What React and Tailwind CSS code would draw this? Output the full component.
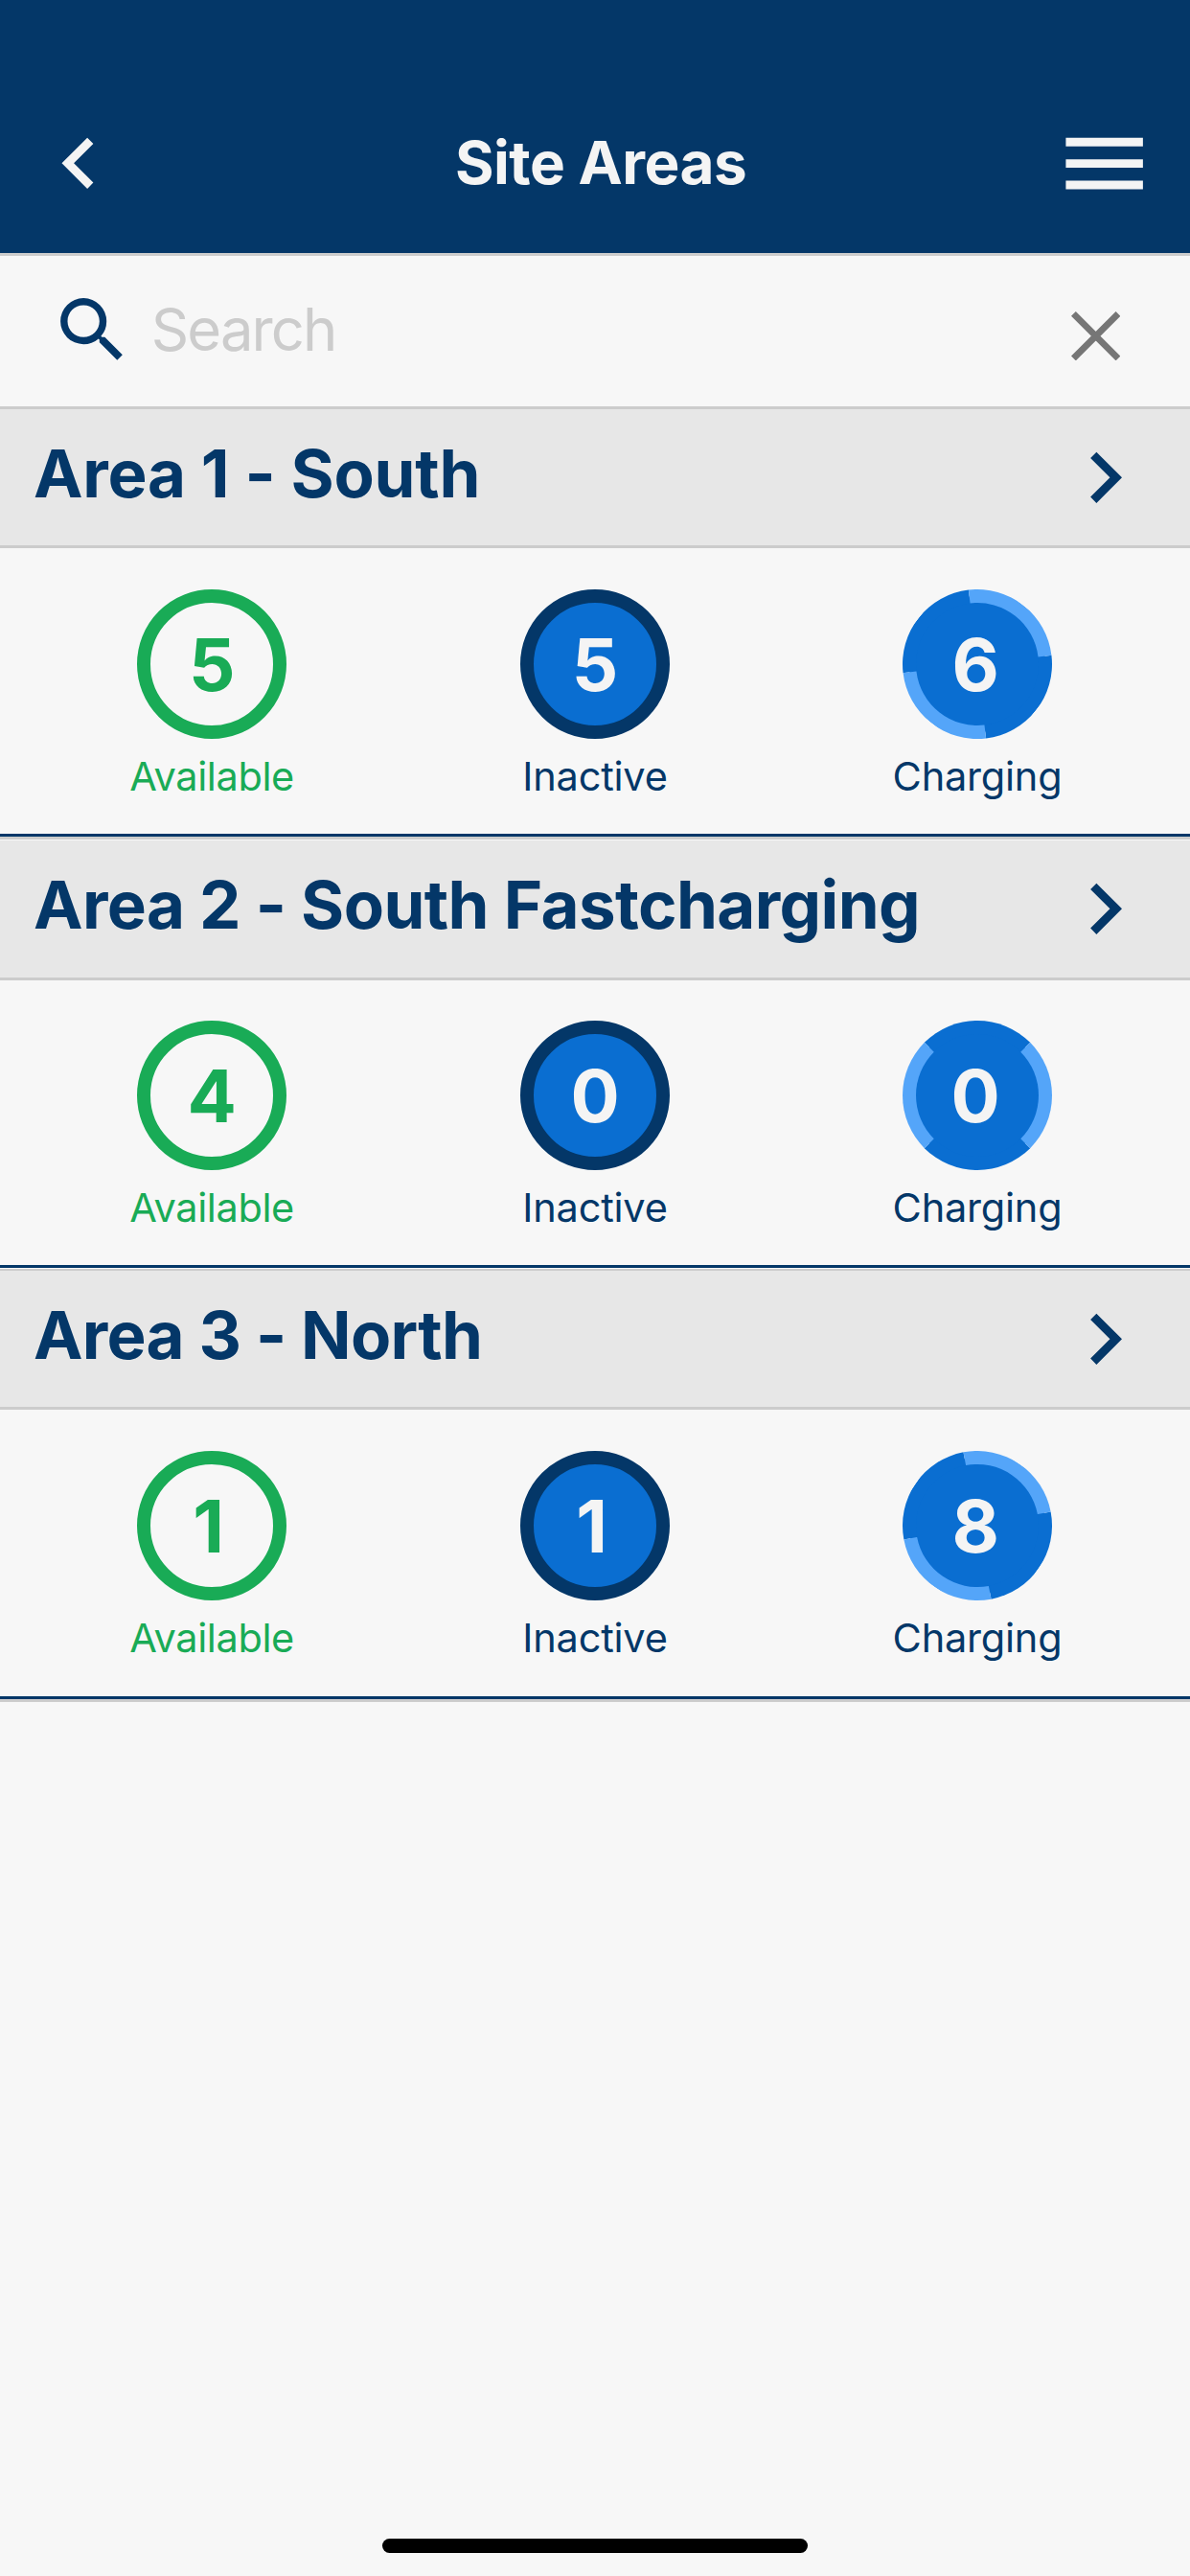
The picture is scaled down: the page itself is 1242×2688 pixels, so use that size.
import React from "react";

const AREAS = [
  {
    name: "Area 1 - South",
    title: "h-[142px] tracking-[-0.25px]",
    body: "h-[298px] pt-[43px]",
    divider: "h-[4px] border-t-[3px] border-[#cccccc]",
    spin: "-rotate-[51.7deg]",
    counts: [5, 5, 6],
  },
  {
    name: "Area 2 - South Fastcharging",
    title: "h-[143px] tracking-[-0.6px]",
    body: "h-[297px] pt-[42px]",
    divider: "h-[3px] border-b-[2px] border-[#cccccc]",
    spin: "",
    counts: [4, 0, 0],
  },
  {
    name: "Area 3 - North",
    title: "h-[142px] tracking-[-0.72px]",
    body: "h-[299px] pt-[43px]",
    divider: "h-[3px] border-t-[3px] border-[#cccccc]",
    spin: "-rotate-[55.7deg]",
    counts: [1, 1, 8],
  },
];

function Icon({ d, className }) {
  return (
    <svg viewBox="0 0 24 24" fill="currentColor" className={`shrink-0 ${className}`}>
      <path d={d} />
    </svg>
  );
}

function Header() {
  return (
    <header className="flex h-[267px] items-center border-b-[3px] border-[#cccccc] bg-[#043768] pt-[76px] pr-[36px] pl-[29px] text-[#f4f4f4]">
      <Icon className="size-[106.5px]" d="M15.41 7.41 14 6l-6 6 6 6 1.41-1.41L10.83 12z" />
      <h1 className="flex-1 pl-[20px] text-center text-[62px] leading-[80px] font-bold tracking-[-0.5px]">
        Site Areas
      </h1>
      <Icon className="mt-[2px] size-[107.3px]" d="M3 18h18v-2H3v2zm0-5h18v-2H3v2zm0-7v2h18V6H3z" />
    </header>
  );
}

function SearchBar() {
  return (
    <div className="flex h-[160px] items-center border-b-[3px] border-[#cccccc] pr-[73px] pl-[52px]">
      <Icon
        className="-mt-[2px] size-[88.8px] text-[#043768]"
        d="M15.5 14h-.79l-.28-.27A6.471 6.471 0 0 0 16 9.5 6.5 6.5 0 1 0 9.5 16c1.61 0 3.09-.59 4.23-1.57l.27.28v.79l5 4.99L20.49 19l-4.99-5zm-6 0C7.01 14 5 11.99 5 9.5S7.01 5 9.5 5 14 7.01 14 9.5 11.99 14 9.5 14z"
      />
      <span className="flex-1 pb-[3px] pl-[17px] text-[61.5px] leading-[80px] tracking-[-1.9px] text-[#cccccc]">
        Search
      </span>
      <svg viewBox="0 0 51.4 51.4" className="mt-[10px] size-[51.4px] text-[#767676]">
        <path
          d="M2.4 2.4 49 49M49 2.4 2.4 49"
          stroke="currentColor"
          strokeWidth="6.8"
          fill="none"
        />
      </svg>
    </div>
  );
}

function Stat({ label, labelClass, ring, number, children }) {
  return (
    <div className={`flex flex-col items-center ${labelClass}`}>
      <div className="grid size-[156px] place-items-center">
        <div className={`col-start-1 row-start-1 size-[156px] rounded-full border-[14px] ${ring}`} />
        <span
          className={`col-start-1 row-start-1 text-[76px] leading-[90px] font-bold ${number} ${
            children === 1 ? "pr-[7px]" : ""
          }`}
        >
          {children}
        </span>
      </div>
      <span className="mt-[15px] text-[41.5px] leading-[48px]">{label}</span>
    </div>
  );
}

function Area({ area }) {
  const [available, inactive, charging] = area.counts;
  return (
    <section>
      <div
        className={`box-content flex items-center justify-between border-b-[3px] border-[#cccccc] bg-[#e7e7e7] pr-[36px] pl-[35px] text-[#043768] ${area.title}`}
      >
        <h2 className="pb-[9px] text-[69px] leading-[90px] font-bold whitespace-nowrap">
          {area.name}
        </h2>
        <Icon className="size-[106.5px]" d="M10 6 8.59 7.41 13.17 12l-4.58 4.59L10 18l6-6z" />
      </div>
      <div className={`grid grid-cols-[400px_400px_398px] pl-[21px] ${area.body}`}>
        <Stat
          label="Available"
          labelClass="text-[#19ab56] tracking-[-0.4px]"
          ring="border-[#19ab56]"
          number=""
        >
          {available}
        </Stat>
        <Stat
          label="Inactive"
          labelClass="text-[#043768] tracking-[-0.22px]"
          ring="border-[#043768] bg-[#0a6ed1]"
          number="text-[#f4f4f4]"
        >
          {inactive}
        </Stat>
        <Stat
          label="Charging"
          labelClass="text-[#043768] tracking-[-0.22px]"
          ring={`border-x-[#54a5f9] border-y-[#0a6ed1] bg-[#0a6ed1] ${area.spin}`}
          number="z-10 pr-1 text-[#f4f4f4]"
        >
          {charging}
        </Stat>
      </div>
      <div className="h-[3px] bg-[#043768]" />
      <div className={area.divider} />
    </section>
  );
}

export default function App() {
  return (
    <div className="flex h-[2688px] w-[1242px] flex-col overflow-hidden bg-[#f7f7f7] font-['Inter',sans-serif]">
      <Header />
      <SearchBar />
      <main className="flex-1">
        {AREAS.map((area) => (
          <Area key={area.name} area={area} />
        ))}
      </main>
      <div className="mb-[24px] h-[15px] w-[444px] self-center rounded-full bg-black" />
    </div>
  );
}
